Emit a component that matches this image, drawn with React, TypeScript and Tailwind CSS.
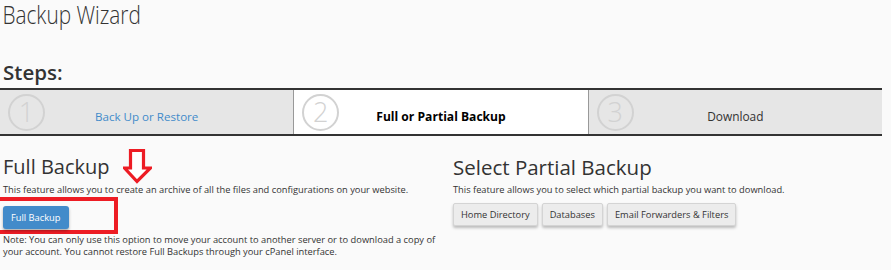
import React from 'react'

const font = { fontFamily: '"Open Sans", "Noto Sans", sans-serif' }

type Step = { n: number; label: string; state: 'done' | 'active' | 'todo' }

const steps: Step[] = [
  { n: 1, label: 'Back Up or Restore', state: 'done' },
  { n: 2, label: 'Full or Partial Backup', state: 'active' },
  { n: 3, label: 'Download', state: 'todo' },
]

function StepCell({ step, last }: { step: Step; last: boolean }) {
  const bg = step.state === 'active' ? 'bg-white' : 'bg-[#e6e6e6]'
  const text =
    step.state === 'done'
      ? 'text-[#428bca] text-[11.6px]'
      : step.state === 'active'
        ? 'text-black font-bold text-[12.1px]'
        : 'text-[#333] text-[11.9px]'
  return (
    <div className={`relative flex-1 h-full flex items-center ${bg} ${last ? '' : 'border-r border-[#999]'}`}>
      {/* circled step number */}
      <div className="ml-[8px] w-[37px] h-[37px] rounded-full border-[2.5px] border-[#d2d2d2] flex items-center justify-center shrink-0">
        <span className="text-[27px] font-light leading-none text-[#d2d2d2] -mt-[2px]">{step.n}</span>
      </div>
      <div className={`flex-1 text-center pt-[10px] pr-[45px] ${text}`}>{step.label}</div>
    </div>
  )
}

const DownArrow = () => (
  <svg width="29" height="35" viewBox="0 0 29 35" className="absolute left-[120px] top-[-6px]" aria-hidden="true">
    <path
      d="M7.5 1.5 H20.5 V19 H27.5 L14 32.5 L1.5 19 H7.5 Z"
      fill="white"
      stroke="#ed1c24"
      strokeWidth="3.2"
      strokeLinejoin="miter"
    />
  </svg>
)

export default function App() {
  return (
    <div className="w-[891px] h-[270px] overflow-hidden bg-[#fafafa] text-[#333]" style={font}>
      <h1 className="pl-[3px] text-[26px] font-light leading-[29px] text-[#333] scale-x-[0.8] origin-left">
        Backup Wizard
      </h1>

      <h2 className="pl-[3px] mt-[31px] text-[20.5px] font-semibold leading-[24px] text-[#333]">Steps:</h2>

      <div className="mt-[4px] w-[882px] h-[48px] flex border-y-2 border-[#333]">
        {steps.map((s, i) => (
          <StepCell key={s.n} step={s} last={i === steps.length - 1} />
        ))}
      </div>

      <div className="flex pl-[3px] mt-[19px]">
        {/* Full backup */}
        <div className="relative w-[450px]">
          <DownArrow />
          <h3 className="text-[20px] leading-[24px] text-[#333]">Full Backup</h3>
          <p className="text-[9.3px] leading-[14px] mt-[4px]">
            This feature allows you to create an archive of all the files and configurations on your website.
          </p>
          <div className="relative mt-[6px] h-[23px]">
            <div className="absolute left-[-8px] top-[-6px] w-[123px] h-[37px] border-4 border-[#ed1c24]" />
            <button className="relative h-[23px] px-[8px] rounded-[3px] bg-[#428bca] text-white text-[9.3px] shadow-[0_2px_3px_rgba(0,0,0,0.3)]">
              Full Backup
            </button>
          </div>
          <p className="w-[436px] text-[9.3px] leading-[12px] mt-[8px]">
            Note: You can only use this option to move your account to another server or to download a copy of your
            account. You cannot restore Full Backups through your cPanel interface.
          </p>
        </div>

        {/* Partial backup */}
        <div className="flex-1">
          <h3 className="text-[20.5px] leading-[24px] text-[#333]">Select Partial Backup</h3>
          <p className="text-[9.3px] leading-[14px] mt-[4px]">
            This feature allows you to select which partial backup you want to download.
          </p>
          <div className="flex gap-[4px] mt-[6px]">
            {['Home Directory', 'Databases', 'Email Forwarders & Filters'].map((b) => (
              <button
                key={b}
                className="h-[23px] px-[7px] rounded-[2px] bg-[#ececec] border border-[#d4d4d4] text-[#333] text-[9.3px] shadow-[0_2px_3px_rgba(0,0,0,0.25)]"
              >
                {b}
              </button>
            ))}
          </div>
        </div>
      </div>
    </div>
  )
}
